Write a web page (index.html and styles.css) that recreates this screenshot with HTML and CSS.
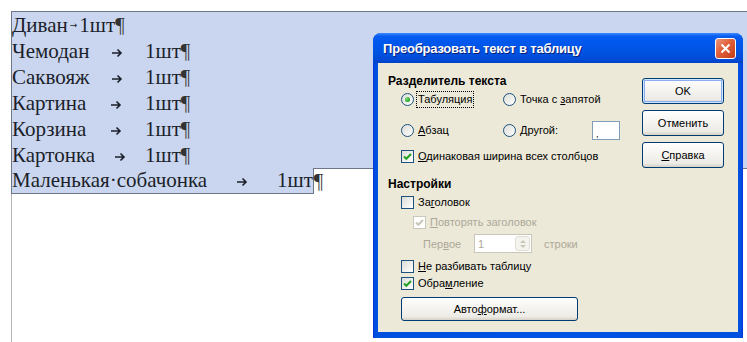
FILE: index.html
```html
<!DOCTYPE html>
<html lang="ru">
<head>
    <meta charset="UTF-8">
    <title>Преобразовать текст в таблицу</title>
    <link rel="stylesheet" href="styles.css">
</head>
<body>
    <div class="doc">
        <div class="page">
            <div class="sel-block">
                <div class="line">Диван<span class="tab-mini">→</span>1шт<span class="pil">¶</span></div>
                <div class="line"><span class="cell">Чемодан<span class="arrow"><svg width="12" height="10" viewBox="0 0 12 10"><path d="M1 5 H10 M6.5 1.5 L10 5 L6.5 8.5" stroke="#1b1f2a" stroke-width="1.6" fill="none"/></svg></span></span>1шт<span class="pil">¶</span></div>
                <div class="line"><span class="cell">Саквояж<span class="arrow"><svg width="12" height="10" viewBox="0 0 12 10"><path d="M1 5 H10 M6.5 1.5 L10 5 L6.5 8.5" stroke="#1b1f2a" stroke-width="1.6" fill="none"/></svg></span></span>1шт<span class="pil">¶</span></div>
                <div class="line"><span class="cell">Картина<span class="arrow"><svg width="12" height="10" viewBox="0 0 12 10"><path d="M1 5 H10 M6.5 1.5 L10 5 L6.5 8.5" stroke="#1b1f2a" stroke-width="1.6" fill="none"/></svg></span></span>1шт<span class="pil">¶</span></div>
                <div class="line"><span class="cell">Корзина<span class="arrow"><svg width="12" height="10" viewBox="0 0 12 10"><path d="M1 5 H10 M6.5 1.5 L10 5 L6.5 8.5" stroke="#1b1f2a" stroke-width="1.6" fill="none"/></svg></span></span>1шт<span class="pil">¶</span></div>
                <div class="line"><span class="cell">Картонка<span class="arrow"><svg width="12" height="10" viewBox="0 0 12 10"><path d="M1 5 H10 M6.5 1.5 L10 5 L6.5 8.5" stroke="#1b1f2a" stroke-width="1.6" fill="none"/></svg></span></span>1шт<span class="pil">¶</span></div>
            </div>
            <div class="line line-last">
                <span class="sel-last"><span class="cell cell-wide">Маленькая·собачонка<span class="arrow"><svg width="12" height="10" viewBox="0 0 12 10"><path d="M1 5 H10 M6.5 1.5 L10 5 L6.5 8.5" stroke="#1b1f2a" stroke-width="1.6" fill="none"/></svg></span></span>1шт</span><span class="pil">¶</span>
            </div>
        </div>
    </div>

    <div class="dialog">
        <div class="titlebar">
            <span class="title">Преобразовать текст в таблицу</span>
            <span class="close-btn">
                <svg width="11" height="11" viewBox="0 0 11 11"><path d="M1.5 1.5 L9.5 9.5 M9.5 1.5 L1.5 9.5" stroke="#fff" stroke-width="2" fill="none"/></svg>
            </span>
        </div>
        <div class="dlg-body">
            <div class="left-col">
                <div class="group-title">Разделитель текста</div>
                <div class="radio-grid">
                    <div class="opt"><span class="radio on"></span><span class="focus">Табуляция</span></div>
                    <div class="opt"><span class="radio"></span><span>Точка с <u>з</u>апятой</span></div>
                    <div class="opt"><span class="radio"></span><span><u>А</u>бзац</span></div>
                    <div class="opt"><span class="radio"></span><span><u>Д</u>ругой:</span><span class="textbox">,</span></div>
                </div>
                <div class="opt row-equal">
                    <span class="check"><svg width="11" height="11" viewBox="0 0 11 11"><path d="M2 5.5 L4.3 7.8 L9 3" stroke="#21a121" stroke-width="2" fill="none"/></svg></span>
                    <span><u>О</u>динаковая ширина всех столбцов</span>
                </div>

                <div class="group-title settings">Настройки</div>
                <div class="opt row-head"><span class="check"></span><span>За<u>г</u>оловок</span></div>
                <div class="opt row-repeat disabled">
                    <span class="check off"><svg width="11" height="11" viewBox="0 0 11 11"><path d="M2 5.5 L4.3 7.8 L9 3" stroke="#c8c6b8" stroke-width="2" fill="none"/></svg></span>
                    <span><u>П</u>овторять заголовок</span>
                </div>
                <div class="opt row-first disabled">
                    <span class="first-label">Пер<u>в</u>ое</span>
                    <span class="spin"><span class="spin-val">1</span><span class="spin-btn"><span class="up"></span><span class="down"></span></span></span>
                    <span class="rows-label">строки</span>
                </div>
                <div class="opt row-split"><span class="check"></span><span><u>Н</u>е разбивать таблицу</span></div>
                <div class="opt row-border">
                    <span class="check"><svg width="11" height="11" viewBox="0 0 11 11"><path d="M2 5.5 L4.3 7.8 L9 3" stroke="#21a121" stroke-width="2" fill="none"/></svg></span>
                    <span>Обра<u>м</u>ление</span>
                </div>
                <button class="btn btn-auto">Авто<u>ф</u>ормат...</button>
            </div>
            <div class="right-col">
                <button class="btn btn-default">OK</button>
                <button class="btn">Отменить</button>
                <button class="btn"><u>С</u>правка</button>
            </div>
        </div>
    </div>
</body>
</html>
```

FILE: styles.css
```css
body {
    margin: 0;
    background: #fff;
    font-family: "Liberation Serif", serif;
    overflow: hidden;
}
.doc {
    height: 342px;
    padding: 11px 0 0 11px;
    box-sizing: border-box;
}
.page {
    height: 100%;
    border-left: 1px solid #b8b8b8;
}
.sel-block {
    margin-left: -1px;
    background: #cad6ef;
    border: 1px solid #6d7789;
    border-right: none;
}
.line {
    display: flex;
    align-items: center;
    height: 26px;
    font-size: 21px;
    color: #1b1f2a;
    white-space: nowrap;
}
.cell {
    display: flex;
    align-items: center;
    width: 133px;
}
.cell-wide {
    width: 265px;
}
.arrow {
    flex: 1;
    display: flex;
    justify-content: center;
    padding-top: 3px;
}
.tab-mini {
    font-family: "DejaVu Sans", sans-serif;
    font-size: 9px;
    margin: 0 2px;
}
.pil {
    color: #333;
}
.line-last {
    margin-top: -1px;
    margin-left: -1px;
    height: 26px;
    align-items: stretch;
}
.sel-last {
    display: flex;
    align-items: center;
    background: #cad6ef;
    border: 1px solid #6d7789;
    border-top: none;
}
.line-last .pil {
    display: flex;
    align-items: center;
}

/* dialog window */
.dialog {
    position: absolute;
    left: 373px;
    top: 33px;
    width: 370px;
    height: 305px;
    box-sizing: border-box;
    padding: 0 5px 6px 5px;
    background: linear-gradient(to right, #0831d9, #0050e0 2px, #0054e3 50%, #0050e0 calc(100% - 2px), #0831d9);
    border-radius: 8px 8px 0 0;
    display: flex;
    flex-direction: column;
    font-family: "Liberation Sans", Arial, sans-serif;
    font-size: 11px;
}
.titlebar {
    height: 30px;
    margin: 0 -5px;
    padding: 0 7px 0 10px;
    display: flex;
    align-items: center;
    justify-content: space-between;
    border-radius: 8px 8px 0 0;
    background: linear-gradient(#3d8cff 0, #0a5ef0 3px, #0058ee 8px, #0054e3 60%, #004ad6 90%, #0041c4 100%);
}
.title {
    color: #fff;
    font-weight: bold;
    font-size: 13px;
    letter-spacing: -0.2px;
    text-shadow: 1px 1px 0 #0a1e78;
}
.close-btn {
    width: 19px;
    height: 19px;
    border: 1px solid #fff;
    border-radius: 3px;
    background: linear-gradient(135deg, #e99880 0, #e2633d 40%, #c33d17 100%);
    display: flex;
    align-items: center;
    justify-content: center;
    margin-top: 1px;
}
.dlg-body {
    flex: 1;
    background: #ece9d8;
    display: flex;
    padding: 11px 14px 0 10px;
}
.left-col {
    width: 254px;
    display: flex;
    flex-direction: column;
}
.right-col {
    width: 82px;
    padding-top: 4px;
    display: flex;
    flex-direction: column;
    gap: 6px;
}
.group-title {
    height: 14px;
    line-height: 14px;
    font-weight: bold;
    font-size: 12px;
}
.settings {
    margin-top: 12px;
}
.radio-grid {
    margin-top: 1px;
    padding-left: 13px;
    display: grid;
    grid-template-columns: 102px auto;
    grid-auto-rows: 20px;
    row-gap: 11px;
}
.opt {
    display: flex;
    align-items: center;
    color: #000;
    white-space: nowrap;
}
.radio {
    width: 11px;
    height: 11px;
    border: 1px solid #1c5180;
    border-radius: 50%;
    background: linear-gradient(135deg, #dcdcd7, #fff);
    margin-right: 4px;
    display: flex;
    align-items: center;
    justify-content: center;
}
.radio.on::after {
    content: "";
    width: 5px;
    height: 5px;
    border-radius: 50%;
    background: radial-gradient(circle at 35% 35%, #7ee07e, #21a121 70%);
}
.focus {
    outline: 1px dotted #000;
    padding: 1px 1px 2px 1px;
    margin-left: -1px;
}
.textbox {
    width: 28px;
    height: 19px;
    margin-left: 34px;
    border: 1px solid #7f9db9;
    background: #fff;
    font-size: 9px;
    padding: 7px 0 0 3px;
    box-sizing: border-box;
}
.check {
    width: 11px;
    height: 11px;
    border: 1px solid #1c5180;
    background: linear-gradient(135deg, #dcdcd7, #fff);
    margin-right: 4px;
    display: flex;
    align-items: center;
    justify-content: center;
}
.check.off {
    border-color: #cac8bb;
    background: #fff;
}
.row-equal {
    margin: 7px 0 0 13px;
    height: 18px;
}
.row-head {
    margin: 2px 0 0 13px;
    height: 18px;
}
.row-repeat {
    margin: 2px 0 0 25px;
    height: 18px;
}
.disabled {
    color: #aca899;
}
.row-first {
    margin: 3px 0 0 35px;
    height: 19px;
}
.first-label {
    width: 51px;
}
.spin {
    width: 58px;
    height: 19px;
    box-sizing: border-box;
    border: 1px solid #c9c7ba;
    background: #fff;
    display: flex;
    align-items: center;
    justify-content: space-between;
    padding: 0 1px 0 3px;
}
.spin-btn {
    width: 15px;
    height: 15px;
    box-sizing: border-box;
    border: 1px solid #e1dfd5;
    border-radius: 3px;
    background: #f4f3ee;
    display: flex;
    flex-direction: column;
    align-items: center;
    justify-content: center;
    gap: 2px;
}
.up, .down {
    width: 0;
    height: 0;
    border-left: 3px solid transparent;
    border-right: 3px solid transparent;
}
.up {
    border-bottom: 3px solid #c9c7ba;
}
.down {
    border-top: 3px solid #c9c7ba;
}
.rows-label {
    margin-left: 12px;
}
.row-split {
    margin: 5px 0 0 13px;
    height: 16px;
}
.row-border {
    margin: 1px 0 0 13px;
    height: 16px;
}
.btn {
    height: 26px;
    border: 1px solid #003c74;
    border-radius: 3px;
    background: linear-gradient(#fff 0, #f6f5f1 40%, #ecebe6 85%, #d6d0c5 100%);
    font-family: "Liberation Sans", Arial, sans-serif;
    font-size: 11px;
    color: #000;
    padding: 0;
}
.btn-default {
    box-shadow: inset 0 0 0 1px #cee7ff, inset 0 0 0 2px #89adf0;
}
.btn-auto {
    width: 177px;
    height: 24px;
    margin: 6px 0 0 13px;
}
```
